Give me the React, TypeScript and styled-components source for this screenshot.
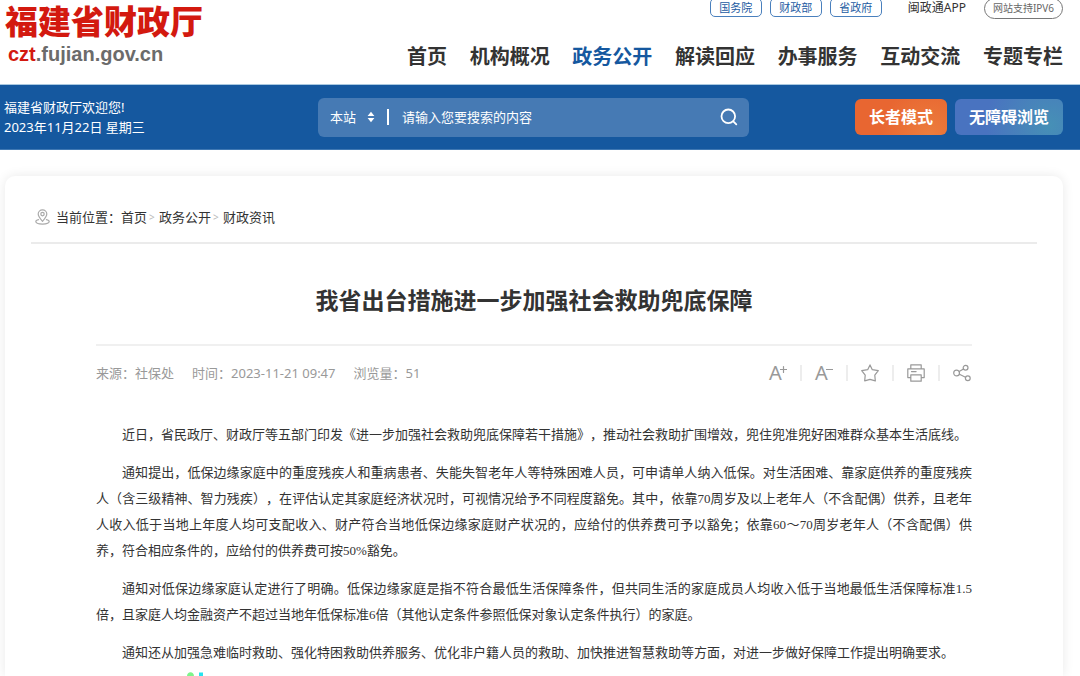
import React from "react";
import styled, { createGlobalStyle, css } from "styled-components";

const sans = `"Noto Sans", "Noto Sans CJK SC", sans-serif`;
const serif = `"Liberation Serif", "Noto Sans CJK SC", serif`;

const GlobalStyle = createGlobalStyle`
  * { box-sizing: border-box; }
  body {
    margin: 0;
    background: #fff;
    color: #333;
    font: 13px/20px ${sans};
    text-spacing-trim: space-all;
  }
  a { color: inherit; text-decoration: none; }
  button { border: 0; padding: 0; background: none; font: inherit; color: inherit; cursor: pointer; }
`;

const Page = styled.div`
  min-height: 100vh;
  display: flex;
  flex-direction: column;
`;

const Header = styled.header`
  height: 84px;
  padding: 0 17px 0 5px;
  display: flex;
  justify-content: space-between;
`;

const Brand = styled.a`
  display: flex;
  flex-direction: column;
`;

const BrandName = styled.span`
  font: 900 33px/46px ${serif};
  color: #d3190f;
`;

const BrandUrl = styled.span`
  padding-left: 3px;
  font: bold 20px/16px "Liberation Sans", sans-serif;
  color: #6b6b6b;
  b { color: #d3190f; }
`;

const HeaderRight = styled.div`
  display: flex;
  flex-direction: column;
  align-items: flex-end;
`;

const TopLinks = styled.div`
  margin-top: -2px;
  height: 21px;
  display: flex;
  gap: 8px;
  font-size: 11px;
`;

const AgencyLink = styled.a`
  width: 52px;
  height: 19px;
  border: 1px solid #4a80bd;
  border-radius: 5px;
  line-height: 18px;
  text-align: center;
  color: #1c5ba2;
`;

const AppLink = styled.a`
  margin: 0 10px 0 18px;
  font-size: 12px;
  line-height: 20px;
`;

const Ipv6Badge = styled.span`
  width: 79px;
  height: 21px;
  border: 1px solid #777;
  border-radius: 11px;
  font-size: 10px;
  line-height: 19px;
  text-align: center;
  color: #666;
`;

const Nav = styled.nav`
  width: 656px;
  margin-top: 22px;
  display: flex;
  justify-content: space-between;
`;

const NavLink = styled.a<{ $active?: boolean }>`
  font-size: 20px;
  line-height: 32px;
  font-weight: bold;
  color: ${(p) => (p.$active ? "#15589f" : "#333")};
`;

const Banner = styled.div`
  height: 66px;
  padding: 0 17px 0 4px;
  border-top: 1px solid #a9c8e0;
  border-bottom: 1px solid #3f78b3;
  background: #15589f;
  color: #fff;
  display: grid;
  grid-template-columns: 1fr minmax(0, 431px) 1fr;
  align-items: center;
`;

const Welcome = styled.p`
  margin: 0;
`;

const Search = styled.form`
  height: 39px;
  padding: 0 11px 0 12px;
  border-radius: 6px;
  background: #467ab4;
  display: flex;
  align-items: center;
`;

const ScopeField = styled.label`
  display: flex;
  align-items: center;
  gap: 9px;
`;

const ScopeSelect = styled.select`
  appearance: none;
  width: 28px;
  border: 0;
  padding: 0;
  background: transparent;
  color: #fff;
  font: inherit;
`;

const SearchInput = styled.input`
  flex: 1;
  min-width: 0;
  margin-left: 12px;
  padding: 0 0 0 13px;
  height: 16px;
  border: 0;
  border-left: 2px solid #fff;
  background: transparent;
  color: #fff;
  font: inherit;
  outline: none;
  &::placeholder { color: #fff; opacity: 1; }
`;

const SearchButton = styled.button`
  display: flex;
`;

const Modes = styled.div`
  display: flex;
  justify-content: flex-end;
  gap: 8px;
`;

const ModeButton = styled.button<{ $tone: "warm" | "cool" }>`
  height: 36px;
  padding: 0 14px;
  border-radius: 6px;
  font-size: 16px;
  font-weight: bold;
  white-space: nowrap;
  ${(p) =>
    p.$tone === "warm"
      ? css`background: radial-gradient(circle at 80% 100%, #ec7d3d, #e86631 60%);`
      : css`background: radial-gradient(circle at 88% 72%, #4690b6, #4973c0 65%);`}
`;

const Card = styled.main`
  flex: 1;
  margin: 26px 17px 0 5px;
  padding: 0 26px;
  border-radius: 10px 10px 0 0;
  box-shadow: 0 0 12px rgba(0, 0, 0, 0.09);
`;

const Breadcrumb = styled.nav`
  height: 68px;
  padding: 16px 0 0 4px;
  border-bottom: 2px solid #ebebeb;
  display: flex;
  align-items: center;
  svg { margin-right: 6px; }
`;

const Arrow = styled.span`
  width: 12px;
  font-size: 10px;
  color: #bbb;
  padding-left: 2px;
`;

const Article = styled.article`
  padding: 0 65px;
`;

const Title = styled.h1`
  margin: 0;
  padding: 39px 0 27px;
  border-bottom: 2px solid #f0f0f0;
  font-size: 23px;
  line-height: 34px;
  text-align: center;
`;

const Meta = styled.div`
  height: 54px;
  display: flex;
  justify-content: space-between;
  align-items: center;
  color: #999;
`;

const Facts = styled.div`
  display: flex;
  gap: 18px;
`;

const Tools = styled.div`
  padding-right: 1px;
  display: flex;
  align-items: center;
  gap: 13px;
`;

const Tool = styled.button`
  width: 18px;
  height: 20px;
  display: flex;
  align-items: center;
  svg { flex: none; }
`;

const SizeLetter = styled.span`
  width: 11px;
  font-size: 20px;
`;

const Divider = styled.i`
  width: 2px;
  height: 16px;
  background: #ededed;
`;

const Body = styled.div`
  margin-top: 22px;
  display: flex;
  flex-direction: column;
  gap: 12px;
  font: 13px/26px ${serif};
  color: #333;
`;

const Paragraph = styled.p`
  margin: 0;
  text-indent: 2em;
  text-align: justify;
`;

const Mark = styled.svg`
  display: block;
  margin: 6px 0 0 91px;
`;

const navItems = ["首页", "机构概况", "政务公开", "解读回应", "办事服务", "互动交流", "专题专栏"];

const paragraphs = [
  "近日，省民政厅、财政厅等五部门印发《进一步加强社会救助兜底保障若干措施》，推动社会救助扩围增效，兜住兜准兜好困难群众基本生活底线。",
  "通知提出，低保边缘家庭中的重度残疾人和重病患者、失能失智老年人等特殊困难人员，可申请单人纳入低保。对生活困难、靠家庭供养的重度残疾人（含三级精神、智力残疾），在评估认定其家庭经济状况时，可视情况给予不同程度豁免。其中，依靠70周岁及以上老年人（不含配偶）供养，且老年人收入低于当地上年度人均可支配收入、财产符合当地低保边缘家庭财产状况的，应给付的供养费可予以豁免；依靠60～70周岁老年人（不含配偶）供养，符合相应条件的，应给付的供养费可按50%豁免。",
  "通知对低保边缘家庭认定进行了明确。低保边缘家庭是指不符合最低生活保障条件，但共同生活的家庭成员人均收入低于当地最低生活保障标准1.5倍，且家庭人均金融资产不超过当地年低保标准6倍（其他认定条件参照低保对象认定条件执行）的家庭。",
  "通知还从加强急难临时救助、强化特困救助供养服务、优化非户籍人员的救助、加快推进智慧救助等方面，对进一步做好保障工作提出明确要求。",
];

const stroke = { fill: "none", stroke: "#999", strokeWidth: 1.2, strokeLinejoin: "round", strokeLinecap: "round" } as const;

export default function App() {
  return (
    <Page>
      <GlobalStyle />
      <Header>
        <Brand href="#">
          <BrandName>福建省财政厅</BrandName>
          <BrandUrl><b>czt</b>.fujian.gov.cn</BrandUrl>
        </Brand>
        <HeaderRight>
          <TopLinks>
            <AgencyLink href="#">国务院</AgencyLink>
            <AgencyLink href="#">财政部</AgencyLink>
            <AgencyLink href="#">省政府</AgencyLink>
            <AppLink href="#">闽政通APP</AppLink>
            <Ipv6Badge>网站支持IPV6</Ipv6Badge>
          </TopLinks>
          <Nav>
            {navItems.map((item) => (
              <NavLink key={item} href="#" $active={item === "政务公开"}>{item}</NavLink>
            ))}
          </Nav>
        </HeaderRight>
      </Header>

      <Banner>
        <Welcome>福建省财政厅欢迎您!<br />2023年11月22日 星期三</Welcome>
        <Search onSubmit={(e) => e.preventDefault()}>
          <ScopeField>
            <ScopeSelect aria-label="搜索范围"><option>本站</option></ScopeSelect>
            <svg width="8" height="12" viewBox="0 0 8 12" fill="#fff">
              <path d="M4 0.8 7.4 5H.6zM4 11.2.6 7h6.8z" />
            </svg>
          </ScopeField>
          <SearchInput type="text" aria-label="搜索" placeholder="请输入您要搜索的内容" />
          <SearchButton type="submit" aria-label="搜索">
            <svg width="18" height="18" viewBox="0 0 18 18" fill="none" stroke="#fff" strokeWidth="1.8" strokeLinecap="round">
              <circle cx="8.3" cy="8.3" r="6.8" />
              <path d="m13.3 13.3 3 3" />
            </svg>
          </SearchButton>
        </Search>
        <Modes>
          <ModeButton $tone="warm">长者模式</ModeButton>
          <ModeButton $tone="cool">无障碍浏览</ModeButton>
        </Modes>
      </Banner>

      <Card>
        <Breadcrumb>
          <svg width="15" height="16" viewBox="0 0 15 16" {...stroke} stroke="#aaa">
            <path d="M7.5 12.3C5 9.6 3.2 7.5 3.2 5.1a4.3 4.3 0 0 1 8.6 0c0 2.4-1.8 4.5-4.3 7.2z" />
            <circle cx="7.5" cy="5.1" r="1.7" />
            <path d="M3.6 10.6C1.8 11 .8 11.7.8 12.6c0 1.5 2.6 2.5 6.7 2.5s6.7-1 6.7-2.5c0-.9-1-1.6-2.8-2" />
          </svg>
          <span>当前位置：</span>
          <a href="#">首页</a><Arrow>&gt;</Arrow>
          <a href="#">政务公开</a><Arrow>&gt;</Arrow>
          <a href="#">财政资讯</a>
        </Breadcrumb>

        <Article>
          <Title>我省出台措施进一步加强社会救助兜底保障</Title>
          <Meta>
            <Facts>
              <span>来源：社保处</span>
              <span>时间：2023-11-21 09:47</span>
              <span>浏览量：51</span>
            </Facts>
            <Tools>
              <Tool aria-label="放大字号">
                <SizeLetter>A</SizeLetter>
                <svg width="7" height="16" viewBox="0 0 7 16" {...stroke}><path d="M.5 4.5h6M3.5 1.5v6" /></svg>
              </Tool>
              <Divider />
              <Tool aria-label="缩小字号">
                <SizeLetter>A</SizeLetter>
                <svg width="7" height="16" viewBox="0 0 7 16" {...stroke}><path d="M.5 4.5h6" /></svg>
              </Tool>
              <Divider />
              <Tool aria-label="收藏">
                <svg width="18" height="18" viewBox="0 0 18 18" {...stroke}>
                  <path d="M9 .9 11.3 5.7 17.3 6.7 13.8 11.2 14.3 16.9 9 15.4 3.7 16.9 4.2 11.2.7 6.7 6.7 5.7z" />
                </svg>
              </Tool>
              <Divider />
              <Tool aria-label="打印">
                <svg width="18" height="18" viewBox="0 0 18 18" {...stroke}>
                  <path d="M3.8 4.7V.8h10.4v3.9M3.8 13.6H.8V4.9h16.4v8.7h-3M3.8 10.8h10.4v6.4H3.8zM4.5 7.6h4.6" />
                </svg>
              </Tool>
              <Divider />
              <Tool aria-label="分享">
                <svg width="18" height="18" viewBox="0 0 18 18" {...stroke}>
                  <circle cx="3.6" cy="9" r="2.9" />
                  <circle cx="12.6" cy="3.8" r="2.4" />
                  <circle cx="14.8" cy="14.3" r="2.4" />
                  <path d="m6.1 7.6 4.4-2.6M6.4 10.2l6.1 3" />
                </svg>
              </Tool>
            </Tools>
          </Meta>
          <Body>
            {paragraphs.map((text) => (
              <Paragraph key={text}>{text}</Paragraph>
            ))}
          </Body>
          <Mark width="16" height="4" viewBox="0 0 16 4">
            <path d="M0 4C.3 1.500 1.500.3 3.500.3S6.700 1.500 7 4z" fill="#7df58a" />
            <rect x="12" y="0.500" width="4" height="3.500" fill="#25e3ee" />
          </Mark>
        </Article>
      </Card>
    </Page>
  );
}
